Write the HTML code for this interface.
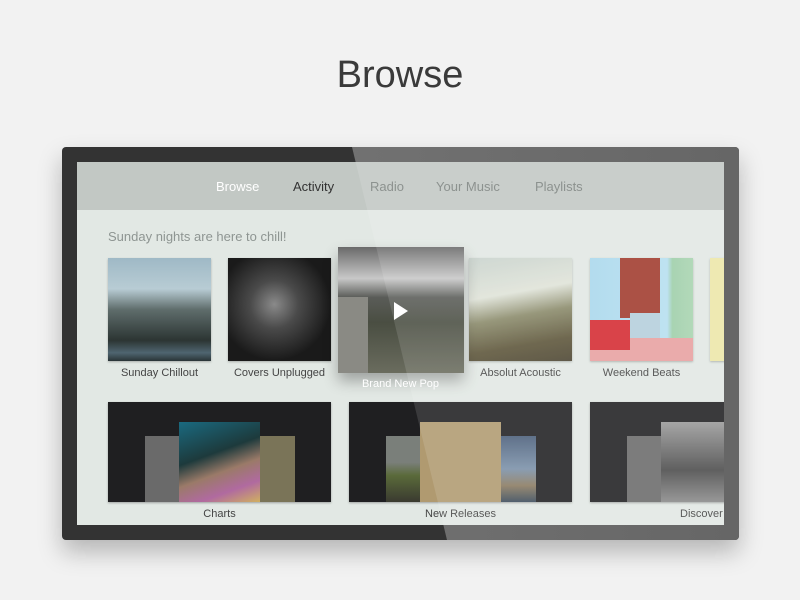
<!DOCTYPE html>
<html><head><meta charset="utf-8"><style>
*{margin:0;padding:0;box-sizing:border-box}
body{width:800px;height:600px;background:#f2f2f2;font-family:"Liberation Sans",sans-serif;position:relative;overflow:hidden}
.a{position:absolute}
h1{position:absolute;left:0;width:800px;top:54px;text-align:center;font-weight:normal;font-size:38px;color:#3a3a3a}
.dev{left:62px;top:147px;width:677px;height:393px;background:#333;border-radius:4px;box-shadow:0 12px 24px rgba(0,0,0,.25);overflow:hidden}
.scr{left:77px;top:162px;width:647px;height:363px;background:#e2e8e4;overflow:hidden}
.nav{left:0;top:0;width:647px;height:48px;background:#c2c8c4}
.nav span{position:absolute;top:17px;font-size:13px;color:#7d8380}
.lbl{position:absolute;font-size:11px;color:#444;text-align:center}
.t{position:absolute;box-shadow:0 1px 2px rgba(0,0,0,.25)}
.card{position:absolute;background:#1f1f21;box-shadow:0 1px 2px rgba(0,0,0,.3)}
.g1{left:0;top:0;width:677px;height:393px;background:linear-gradient(90deg,#7a7a7a,#666);clip-path:polygon(290px 0,677px 0,677px 393px,385px 393px)}
.g2{left:0;top:0;width:647px;height:363px;background:rgba(255,255,255,.12);clip-path:polygon(275px -15px,662px -15px,662px 378px,370px 378px)}
</style></head><body>
<h1>Browse</h1>
<div class="a dev"><div class="a g1"></div></div>
<div class="a scr">
 <div class="a nav">
  <span style="left:139px;color:#fff">Browse</span>
  <span style="left:216px;color:#333">Activity</span>
  <span style="left:293px">Radio</span>
  <span style="left:359px">Your Music</span>
  <span style="left:458px">Playlists</span>
 </div>
 <div class="a" style="left:31px;top:67px;font-size:13px;color:#8e9592">Sunday nights are here to chill!</div>
 <div class="t" style="left:31px;top:96px;width:103px;height:103px;background:linear-gradient(180deg,#9fb9c6 0%,#b8ccd4 30%,#5f6d6c 50%,#2c3533 80%,#4f6570 92%,#2a3436 100%)"></div>
 <div class="t" style="left:151px;top:96px;width:103px;height:103px;background:radial-gradient(circle at 45% 45%,#8a8a8a 0,#4a4a4a 30%,#1a1a1a 70%)"></div>
 <div class="t" style="left:392px;top:96px;width:103px;height:103px;background:linear-gradient(170deg,#c8d2cc 0%,#dfe3d8 35%,#8a8a6a 55%,#5c5438 80%,#4a4330 100%)"></div>
 <div class="t" style="left:513px;top:96px;width:103px;height:103px;background:linear-gradient(90deg,#a9d8ec 0%,#b5def0 75%,#9dcea8 80%,#a8d4b0 100%)"><div class="a" style="left:30px;top:0;width:40px;height:60px;background:#a03a2c"></div><div class="a" style="left:40px;top:55px;width:30px;height:45px;background:#b4cfdc"></div><div class="a" style="left:0;top:80px;width:103px;height:23px;background:#e8a0a0"></div><div class="a" style="left:0;top:62px;width:40px;height:30px;background:#d42a30"></div></div>
 <div class="t" style="left:633px;top:96px;width:20px;height:103px;background:#ece6a8"></div>
 <div class="t" style="left:261px;top:85px;width:126px;height:126px;background:linear-gradient(180deg,#6a6a6a 0%,#c8c8c8 25%,#5a5c58 40%,#4a4e42 60%,#6a6c5e 100%);box-shadow:0 8px 14px rgba(0,0,0,.3)">
  <div class="a" style="left:0;top:50px;width:30px;height:76px;background:#8a8a84"></div>
  <svg class="a" style="left:55px;top:54px" width="16" height="20"><path d="M1 1L15 10L1 19Z" fill="#fff"/></svg>
 </div>
 <div class="lbl" style="left:11px;top:205px;width:143px">Sunday Chillout</div>
 <div class="lbl" style="left:131px;top:205px;width:143px">Covers Unplugged</div>
 <div class="lbl" style="left:252px;top:216px;width:143px;color:#fff">Brand New Pop</div>
 <div class="lbl" style="left:372px;top:205px;width:143px">Absolut Acoustic</div>
 <div class="lbl" style="left:493px;top:205px;width:143px">Weekend Beats</div>

 <div class="card" style="left:31px;top:240px;width:223px;height:100px">
  <div class="a" style="left:37px;top:34px;width:36px;height:66px;background:#6a6a6a"></div>
  <div class="a" style="left:151px;top:34px;width:36px;height:66px;background:#7a7458"></div>
  <div class="a" style="left:71px;top:20px;width:81px;height:80px;background:linear-gradient(160deg,#1a6a80 0%,#1d3a3c 40%,#9a7a68 60%,#b06aa0 80%,#d0b060 100%)"></div>
 </div>
 <div class="card" style="left:272px;top:240px;width:223px;height:100px">
  <div class="a" style="left:37px;top:34px;width:36px;height:66px;background:linear-gradient(180deg,#7a7f7a 0,#7a7f7a 40%,#5a6a3a 60%,#3a3a30 100%)"></div>
  <div class="a" style="left:151px;top:34px;width:36px;height:66px;background:linear-gradient(180deg,#4a5e7a 0,#7a90a8 50%,#8a7a60 75%,#3a4a5a 100%)"></div>
  <div class="a" style="left:71px;top:20px;width:81px;height:80px;background:#b09a70"></div>
 </div>
 <div class="card" style="left:513px;top:240px;width:140px;height:100px">
  <div class="a" style="left:37px;top:34px;width:36px;height:66px;background:#6a6a6a"></div>
  <div class="a" style="left:71px;top:20px;width:69px;height:80px;background:linear-gradient(180deg,#9a9a9a,#4a4a4a 60%,#8a8a8a)"></div>
 </div>
 <div class="lbl" style="left:31px;top:346px;width:223px">Charts</div>
 <div class="lbl" style="left:272px;top:346px;width:223px">New Releases</div>
 <div class="lbl" style="left:603px;top:346px;width:60px;text-align:left">Discover</div>
 <div class="a g2"></div>
</div>
</body></html>
